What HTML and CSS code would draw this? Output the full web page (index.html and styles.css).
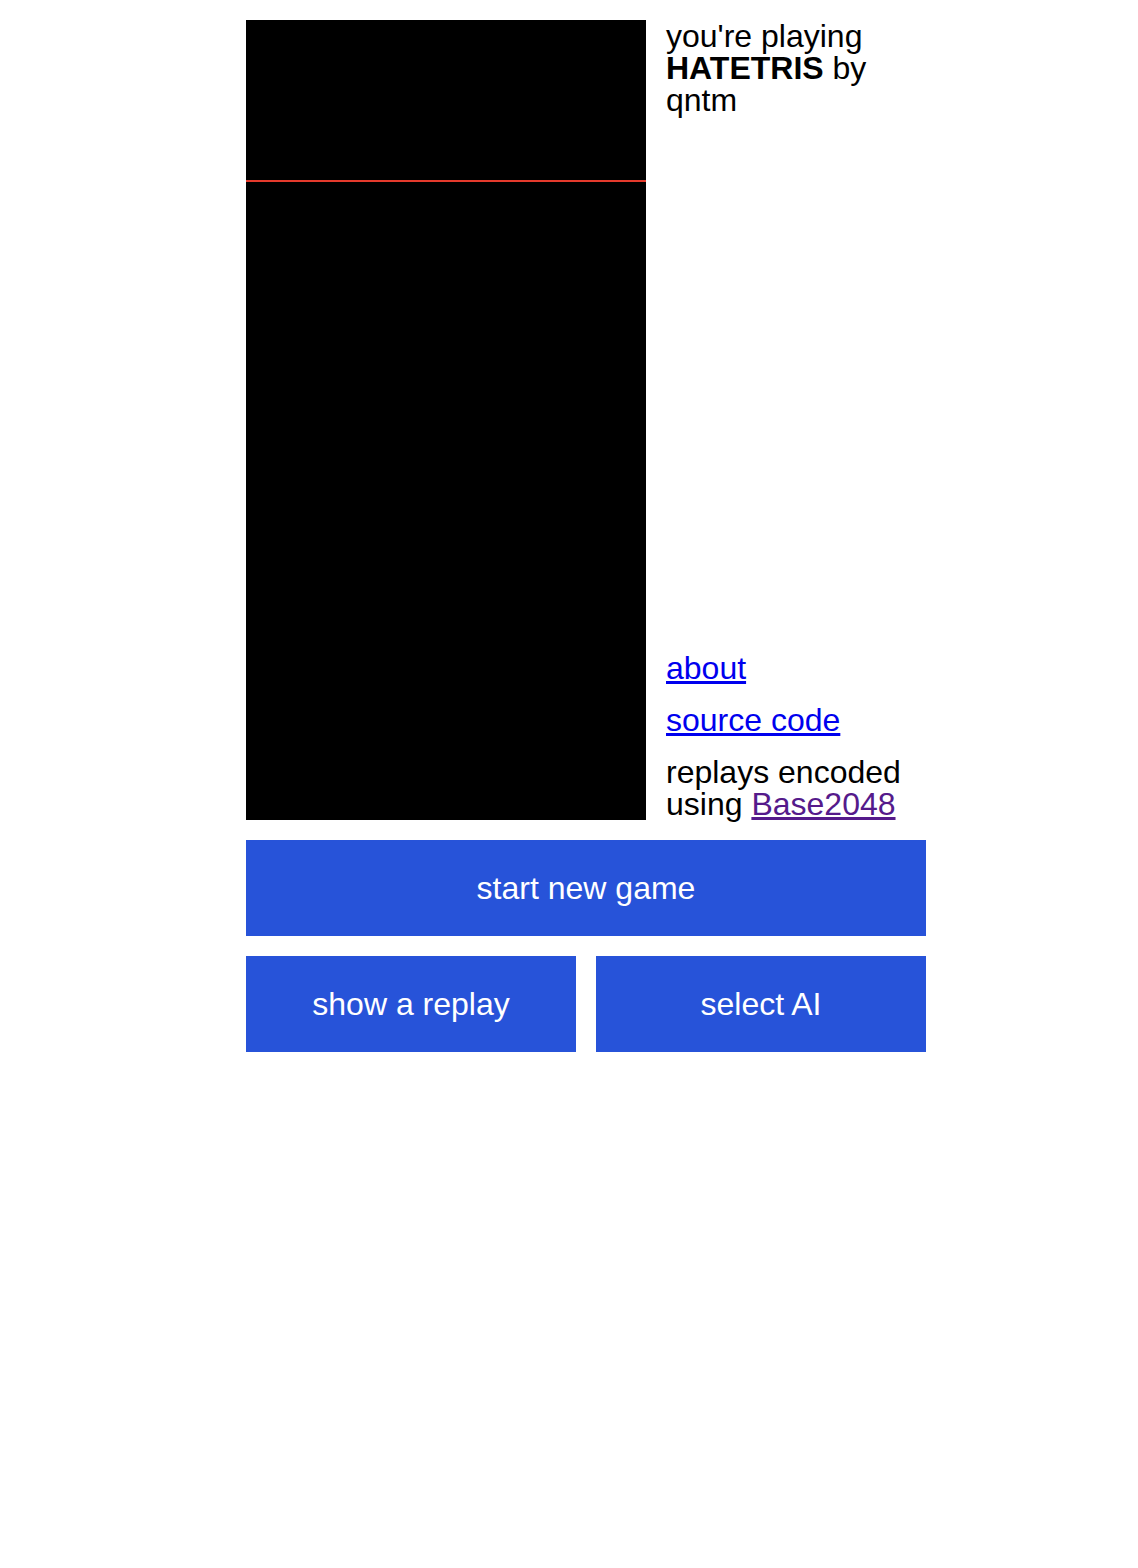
FILE: index.html
```html
<!DOCTYPE html>
<html lang="en">
<head>
  <meta charset="UTF-8">
  <title>HATETRIS</title>
  <link rel="stylesheet" href="styles.css">
</head>
<body>
  <div class="app">
    <div class="game">
      <div class="well">
        <div class="spawn-zone"></div>
      </div>
      <div class="side">
        <p class="title">you're playing <b>HATETRIS</b> by qntm</p>
        <div class="links">
          <p><a href="#">about</a></p>
          <p><a href="#">source code</a></p>
          <p>replays encoded using <a class="visited" href="#">Base2048</a></p>
        </div>
      </div>
    </div>

    <button class="btn">start new game</button>
    <div class="btn-row">
      <button class="btn">show a replay</button>
      <button class="btn">select AI</button>
    </div>
  </div>
</body>
</html>
```

FILE: styles.css
```css
body {
  margin: 0;
  font-family: "Liberation Sans", Arial, sans-serif;
  font-size: 32px;
  background: #fff;
  color: #000;
}
.app {
  width: 680px;
  margin-left: 246px;
  padding-top: 20px;
}
.game {
  display: flex;
  gap: 20px;
}
.well {
  width: 400px;
  height: 800px;
  background: #000;
  flex-shrink: 0;
}
.spawn-zone {
  height: 160px;
  border-bottom: 2px solid #e53a2c;
}
.side {
  flex: 1;
  display: flex;
  flex-direction: column;
  justify-content: space-between;
}
.side p {
  margin: 0;
  line-height: 32px;
}
.links p + p {
  margin-top: 20px;
}
a {
  color: #0000ee;
}
a.visited {
  color: #551a8b;
}
.btn {
  display: block;
  width: 100%;
  height: 96px;
  margin-top: 20px;
  border: none;
  background: #2753d9;
  color: #fff;
  font-family: inherit;
  font-size: 32px;
  cursor: pointer;
}
.btn-row {
  display: grid;
  grid-template-columns: 1fr 1fr;
  gap: 20px;
}
```
